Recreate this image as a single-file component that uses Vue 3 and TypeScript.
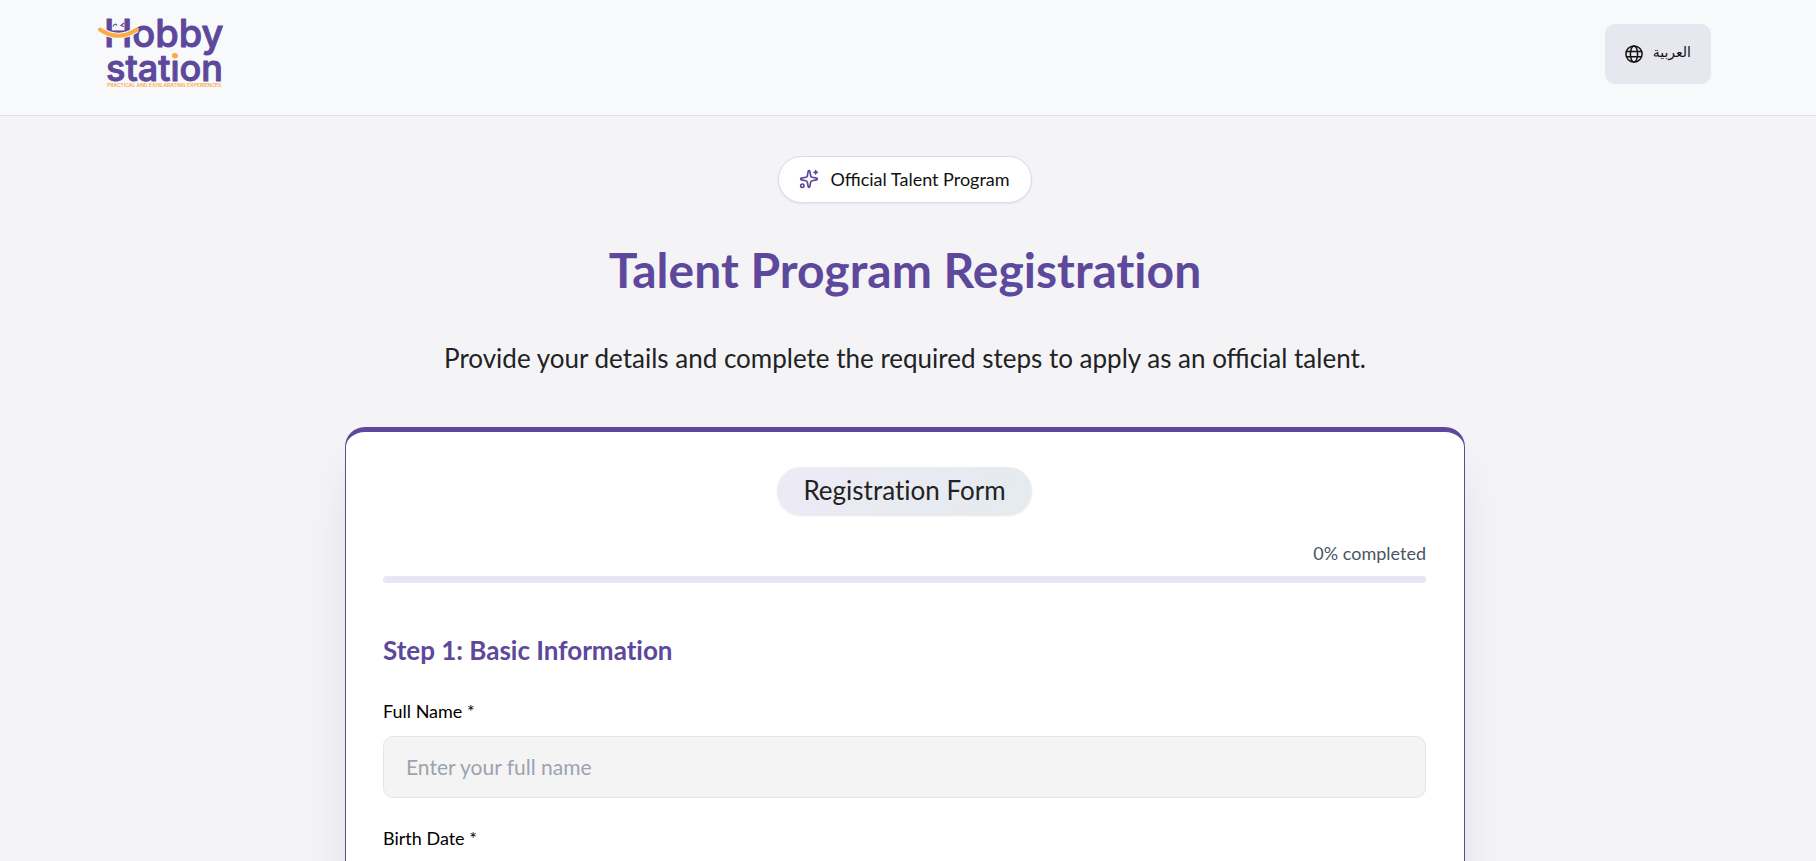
<script setup lang="ts">
import { ref, computed } from 'vue'

interface Field {
  id: string
  label: string
  placeholder: string
}

const fields: Field[] = [
  { id: 'full-name', label: 'Full Name *', placeholder: 'Enter your full name' },
  { id: 'birth-date', label: 'Birth Date *', placeholder: 'YYYY-MM-DD' },
]

const values = ref<Record<string, string>>({ 'full-name': '', 'birth-date': '' })
const progress = ref(0)
const progressLabel = computed(() => `${progress.value}% completed`)
</script>

<template>
  <div class="page">
    <header class="header">
      <a href="#" class="brand" aria-label="Hobby Station">
        <svg class="logo" viewBox="0 0 130 94" role="img" aria-hidden="true">
          <defs>
            <linearGradient id="dotted" gradientUnits="userSpaceOnUse" x1="0" y1="0" x2="0" y2="94">
              <stop offset="0.55" stop-color="#fbab43" />
              <stop offset="0.55" stop-color="#5d489c" />
            </linearGradient>
          </defs>
          <g class="wordmark">
            <text class="upper" x="6" y="39">Hobby</text>
            <text x="8" y="73">stat<tspan class="dotted">i</tspan>on</text>
          </g>
          <path d="M2 21.500 Q20 34 39 21.500" fill="none" stroke="#f8f9fb" stroke-width="6" />
          <path d="M2 21.500 Q20 34 39 21.500" fill="none" stroke="#fbab43" stroke-width="4" stroke-linecap="round" />
          <path d="M15 18.500 q2 -4 4 -1 M26 15 l-3 2.500 l3 1" fill="none" stroke="#5d489c" stroke-width="1.200" />
          <text class="tagline" x="9" y="79">PRACTICAL AND EXHILARATING EXPERIENCES</text>
        </svg>
      </a>
      <button type="button" class="language">
        <svg class="globe" viewBox="0 0 24 24" aria-hidden="true">
          <circle cx="12" cy="12" r="10.800" />
          <ellipse cx="12" cy="12" rx="4.800" ry="10.800" />
          <path d="M2.500 8.500h19M2.500 15.500h19" />
        </svg>
        <span class="language-name" lang="ar">العربية</span>
      </button>
    </header>

    <main class="main">
      <p class="badge">
        <svg class="sparkles" viewBox="0 0 24 24" aria-hidden="true">
          <path d="M11.017 2.814a1 1 0 0 1 1.966 0l1.051 5.558a2 2 0 0 0 1.594 1.594l5.558 1.051a1 1 0 0 1 0 1.966l-5.558 1.051a2 2 0 0 0-1.594 1.594l-1.051 5.558a1 1 0 0 1-1.966 0l-1.051-5.558a2 2 0 0 0-1.594-1.594l-5.558-1.051a1 1 0 0 1 0-1.966l5.558-1.051a2 2 0 0 0 1.594-1.594z" />
          <path d="M20 2v4M22 4h-4" />
          <circle cx="4" cy="20" r="2" />
        </svg>
        Official Talent Program
      </p>
      <h1 class="title">Talent Program Registration</h1>
      <p class="subtitle">Provide your details and complete the required steps to apply as an official talent.</p>

      <form class="card" @submit.prevent>
        <h2 class="form-name">Registration Form</h2>
        <p class="progress-label">{{ progressLabel }}</p>
        <div class="track" role="progressbar" aria-label="Form progress" :aria-valuenow="progress" aria-valuemin="0" aria-valuemax="100">
          <div class="fill" :style="{ width: progress + '%' }"></div>
        </div>
        <h3 class="step">Step 1: Basic Information</h3>
        <div v-for="field in fields" :key="field.id" class="field">
          <label :for="field.id">{{ field.label }}</label>
          <input :id="field.id" v-model="values[field.id]" type="text" :placeholder="field.placeholder" />
        </div>
      </form>
    </main>
  </div>
</template>

<style>
html {
  scrollbar-width: none;
}
body {
  margin: 0;
  background: #f4f4f7;
}
</style>

<style scoped>
.page {
  box-sizing: border-box;
  min-height: 100vh;
  background: #f4f4f7;
  color: #222222;
  font-family: Lato, "Noto Sans", sans-serif;
}
.header {
  box-sizing: border-box;
  display: flex;
  justify-content: space-between;
  align-items: flex-start;
  min-height: 116px;
  padding: 8px 105px 0 98px;
  background: #f8f9fb;
  border-bottom: 1px solid #dedeee;
}
.brand {
  display: block;
}
.logo {
  display: block;
  width: 130px;
  height: 94px;
}
.wordmark {
  font-family: Inter, sans-serif;
  font-size: 36px;
  font-weight: 500;
  fill: #5d489c;
  stroke: #5d489c;
  stroke-width: 1;
  stroke-linejoin: round;
}
.upper {
  font-size: 38px;
}
.dotted {
  fill: url(#dotted);
  stroke: url(#dotted);
}
.tagline {
  font-family: Inter, sans-serif;
  font-size: 5px;
  font-weight: 600;
  fill: #fbab43;
}
.language {
  display: flex;
  align-items: center;
  gap: 10px;
  height: 60px;
  margin-top: 16px;
  padding: 0 20px;
  border: 0;
  border-radius: 10px;
  background: #e7e7ef;
  color: #111111;
  font-family: "Liberation Serif", "DejaVu Sans", serif;
  font-size: 14px;
}
.language-name {
  padding-bottom: 4px;
}
.globe {
  width: 18px;
  height: 18px;
  fill: none;
  stroke: currentColor;
  stroke-width: 2;
}
.main {
  display: flex;
  flex-direction: column;
  align-items: center;
  padding: 40px 30px 0 24px;
}
.badge {
  box-sizing: border-box;
  display: flex;
  align-items: center;
  gap: 11px;
  height: 47px;
  margin: 0;
  padding: 0 21px 2px 20px;
  border: 1px solid #dcd9ec;
  border-radius: 24px;
  background: #ffffff;
  box-shadow: 0 1px 2px rgba(93, 72, 156, 0.12);
  color: #111111;
  font-size: 18px;
}
.sparkles {
  width: 20px;
  height: 20px;
  fill: none;
  stroke: #5d489c;
  stroke-width: 2;
  stroke-linecap: round;
  stroke-linejoin: round;
}
.title,
.form-name,
.step {
  font-variant-ligatures: no-common-ligatures;
}
.title {
  margin: 39px 0 0;
  color: #5d489c;
  font-size: 48px;
  font-weight: 700;
  line-height: 56px;
  text-align: center;
}
.subtitle {
  margin: 42px 0 0;
  font-size: 26px;
  line-height: 36px;
  text-align: center;
}
.card {
  box-sizing: border-box;
  display: flex;
  flex-direction: column;
  width: 100%;
  max-width: 1120px;
  margin-top: 51px;
  padding: 35px 38px 40px 37px;
  border: 1px solid #5d489c;
  border-top-width: 5px;
  border-radius: 20px;
  background: #ffffff;
  box-shadow: 0 28px 56px -16px rgba(0, 0, 0, 0.14);
}
.form-name {
  box-sizing: border-box;
  align-self: center;
  height: 48px;
  margin: 0;
  padding: 0 26px;
  border-radius: 24px;
  background: linear-gradient(135deg, #eeeaf6, #e4ebee);
  box-shadow: 0 1px 2px rgba(0, 0, 0, 0.1);
  font-size: 26px;
  font-weight: 400;
  line-height: 46px;
}
.progress-label {
  margin: 25px 0 9px;
  color: #4b5563;
  font-size: 18px;
  line-height: 27px;
  text-align: right;
}
.track {
  height: 7px;
  overflow: hidden;
  border-radius: 4px;
  background: #e8e5f6;
}
.fill {
  height: 100%;
  background: #5d489c;
}
.step {
  margin: 49px 0 31px;
  color: #5d489c;
  font-size: 26px;
  font-weight: 700;
  line-height: 36px;
}
.field {
  display: flex;
  flex-direction: column;
  gap: 12px;
  margin-bottom: 28px;
}
.field label {
  color: #000000;
  font-size: 18px;
  line-height: 25px;
}
.field input {
  box-sizing: border-box;
  width: 100%;
  height: 62px;
  padding: 0 22px 2px;
  border: 1px solid #e5e5e5;
  border-radius: 10px;
  background: #f4f4f4;
  color: #222222;
  font-family: inherit;
  font-size: 21px;
}
.field input::placeholder {
  color: #9ca3af;
  opacity: 1;
}
</style>
